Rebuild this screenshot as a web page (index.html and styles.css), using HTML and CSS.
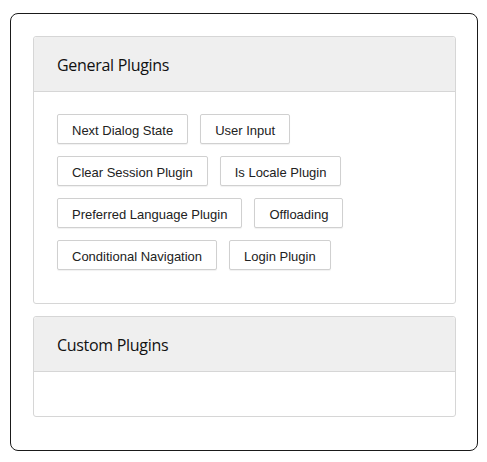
FILE: index.html
```html
<!DOCTYPE html>
<html>
<head>
<meta charset="utf-8">
<link rel="stylesheet" href="styles.css">
</head>
<body>
<div class="frame">
  <section class="panel">
    <div class="panel-heading">General Plugins</div>
    <div class="panel-body">
      <div class="row">
        <button class="plugin">Next Dialog State</button>
        <button class="plugin">User Input</button>
      </div>
      <div class="row">
        <button class="plugin">Clear Session Plugin</button>
        <button class="plugin">Is Locale Plugin</button>
      </div>
      <div class="row">
        <button class="plugin">Preferred Language Plugin</button>
        <button class="plugin">Offloading</button>
      </div>
      <div class="row">
        <button class="plugin">Conditional Navigation</button>
        <button class="plugin">Login Plugin</button>
      </div>
    </div>
  </section>
  <section class="panel">
    <div class="panel-heading">Custom Plugins</div>
    <div class="panel-body empty"></div>
  </section>
</div>
</body>
</html>
```
FILE: styles.css
```css
html, body {
  margin: 0;
  padding: 0;
  background: #fff;
}
.frame {
  margin: 13px 10px 0 10px;
  box-sizing: border-box;
  width: 468px;
  border: 1px solid #1a1a1a;
  border-radius: 8px;
  padding: 22px 21px 21px 22px;
}
.panel {
  border: 1px solid #d6d6d6;
  border-radius: 3px;
  margin-bottom: 12px;
  background: #fff;
}
.panel-heading {
  background: #efefef;
  border-bottom: 1px solid #d6d6d6;
  border-radius: 3px 3px 0 0;
  padding: 18px 23px 16px 23px;
  height: 20px;
  font-family: "Open Sans", sans-serif;
  font-size: 16px;
  letter-spacing: -0.3px;
  line-height: 20px;
  color: #111;
}
.panel-body {
  padding: 22px 23px 21px 23px;
}
.panel-body.empty {
  padding: 0;
  height: 44px;
}
.row {
  display: flex;
  gap: 12px;
  margin-bottom: 12px;
}
.plugin {
  font-family: "Liberation Sans", Arial, sans-serif;
  font-size: 13px;
  line-height: 16px;
  color: #222;
  background: #fff;
  border: 1px solid #d0d0d0;
  border-radius: 2px;
  padding: 8px 14px 4px;
  height: 30px;
  box-shadow: 0 1px 1px rgba(0,0,0,0.06);
  cursor: pointer;
}
```
